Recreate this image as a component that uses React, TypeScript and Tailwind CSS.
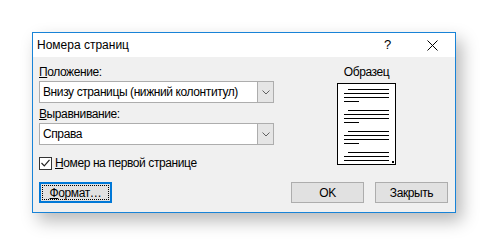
import React from "react";

function Combo({ value }: { value: string }) {
  return (
    <div className="flex h-[22px] w-[235px] border border-[#adadad] bg-white">
      <div className="flex flex-1 items-center overflow-hidden whitespace-nowrap pl-[3px] text-[12px] text-black">
        {value}
      </div>
      <div className="flex w-[16px] items-center justify-center border-l border-[#adadad] bg-[#e5e5e5]">
        <svg width="8" height="5" viewBox="0 0 8 5">
          <path d="M0.5 0.5 L4 4 L7.5 0.5" fill="none" stroke="#606060" strokeWidth="1" />
        </svg>
      </div>
    </div>
  );
}

function PreviewPage() {
  const groups = [0, 1, 2, 3];
  return (
    <div className="relative flex h-[82px] w-[59px] flex-col gap-[8px] border border-black bg-white px-[6px] pt-[5px]">
      {groups.map((g) => (
        <div key={g} className="flex flex-col gap-[3px]">
          <div className="ml-[4px] h-px bg-black" />
          <div className="h-px bg-black" />
          <div className="h-px bg-black" />
          <div className="h-px w-[15px] bg-black" />
        </div>
      ))}
      <div className="absolute bottom-[1px] right-[1px] h-[2px] w-[2px] bg-black" />
    </div>
  );
}

function Button({ children, focused }: { children: React.ReactNode; focused?: boolean }) {
  if (focused) {
    return (
      <div className="flex h-[21px] w-[73px] border-2 border-[#0078d7] bg-[#e1e1e1] p-px">
        <div className="flex flex-1 items-center justify-center border border-dotted border-black text-[12px] text-black">
          {children}
        </div>
      </div>
    );
  }
  return (
    <div className="flex h-[21px] w-[73px] items-center justify-center border border-[#adadad] bg-[#e1e1e1] text-[12px] text-black">
      {children}
    </div>
  );
}

export default function App() {
  return (
    <div
      className="h-[245px] w-[488px] bg-white pl-[32px] pt-[32px]"
      style={{ fontFamily: '"Liberation Sans", Arial, sans-serif' }}
    >
      <div className="flex h-[181px] w-[424px] flex-col border border-[#1883d7] bg-[#f0f0f0] shadow-[6px_8px_16px_rgba(0,0,0,0.28)]">
        {/* title bar */}
        <div className="flex h-[24px] items-center bg-white pl-[4px] text-[12px] text-black">
          <span className="flex-1">Номера страниц</span>
          <span className="w-[26px] text-[13px]">?</span>
          <div className="flex w-[45px] items-center justify-center">
            <svg width="11" height="11" viewBox="0 0 11 11">
              <path d="M0.5 0.5 L10.5 10.5 M10.5 0.5 L0.5 10.5" stroke="#000" strokeWidth="1" />
            </svg>
          </div>
        </div>

        {/* body */}
        <div className="flex flex-1 flex-col whitespace-nowrap pl-[6px] pr-[7px] pt-[8px] text-[12px] tracking-[-0.4px] text-black">
          <div className="flex">
            <div className="flex w-[235px] flex-col">
              <div className="h-[15px] leading-[15px]">
                <u>П</u>оложение:
              </div>
              <div className="mt-[1px]">
                <Combo value="Внизу страницы (нижний колонтитул)" />
              </div>
              <div className="mt-[4px] h-[15px] leading-[15px]">
                <u>В</u>ыравнивание:
              </div>
              <div className="mt-[1px]">
                <Combo value="Справа" />
              </div>
              <div className="mt-[9px] flex items-center gap-[3px]">
                <div className="flex h-[13px] w-[13px] items-center justify-center border border-[#333] bg-white">
                  <svg width="9" height="8" viewBox="0 0 9 8">
                    <path d="M0.5 4 L3.3 6.8 L8.5 0.8" fill="none" stroke="#222" strokeWidth="1.2" />
                  </svg>
                </div>
                <span>
                  <u>Н</u>омер на первой странице
                </span>
              </div>
            </div>
            <div className="ml-[63px] flex w-[59px] flex-col items-center">
              <div className="h-[15px] leading-[15px]">Образец</div>
              <div className="mt-[3px]">
                <PreviewPage />
              </div>
            </div>
          </div>

          <div className="mt-[10px] flex items-center">
            <Button focused>
              <span>
                <u>Ф</u>ормат…
              </span>
            </Button>
            <div className="flex-1" />
            <Button>OK</Button>
            <div className="w-[11px]" />
            <Button>Закрыть</Button>
          </div>
        </div>
      </div>
    </div>
  );
}
